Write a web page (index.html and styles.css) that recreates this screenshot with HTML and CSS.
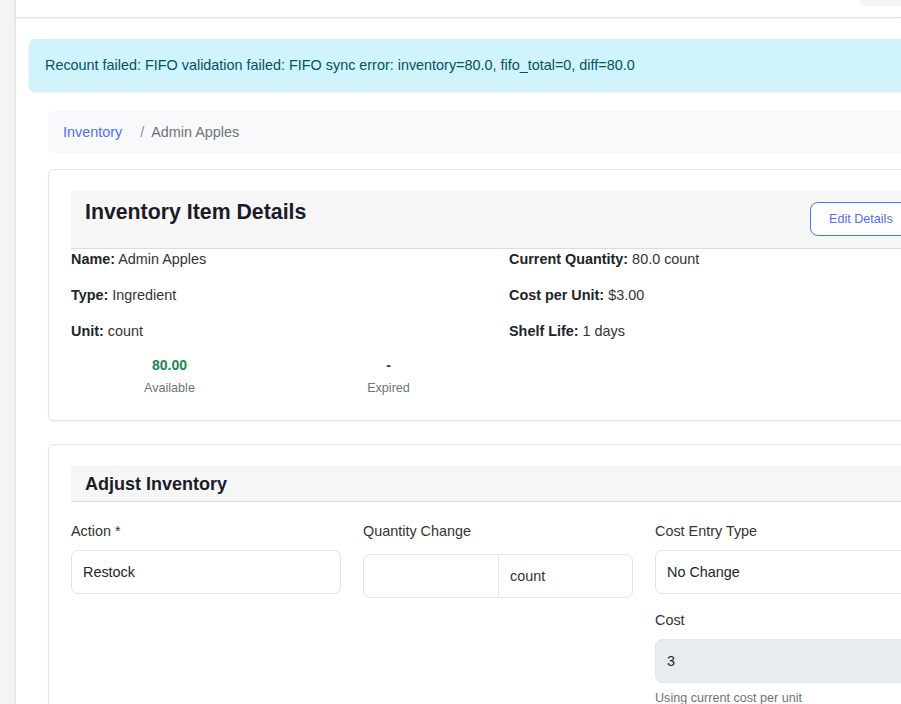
FILE: index.html
```html
<!DOCTYPE html>
<html lang="en">
<head>
<meta charset="utf-8">
<title>Admin Apples - Inventory</title>
<link rel="stylesheet" href="styles.css">
</head>
<body>
<div class="layout">
  <aside class="sidebar"></aside>
  <main class="main">
    <header class="topbar"><div class="topbar-btn"></div></header>
    <div class="content">
      <div class="alert">Recount failed: FIFO validation failed: FIFO sync error: inventory=80.0, fifo_total=0, diff=80.0</div>
      <div class="inner">
        <nav class="breadcrumb">
          <a class="crumb-link" href="#">Inventory</a>
          <span class="crumb-sep">/</span>
          <span class="crumb-current">Admin Apples</span>
        </nav>

        <section class="card card-details">
          <div class="card-header">
            <h2 class="card-title">Inventory Item Details</h2>
            <button class="btn-outline" type="button">Edit Details</button>
          </div>
          <div class="details">
            <div class="details-col">
              <p class="detail"><b>Name:</b> Admin Apples</p>
              <p class="detail"><b>Type:</b> Ingredient</p>
              <p class="detail"><b>Unit:</b> count</p>
              <div class="stats">
                <div class="stat">
                  <div class="stat-value green">80.00</div>
                  <div class="stat-label">Available</div>
                </div>
                <div class="stat">
                  <div class="stat-value">-</div>
                  <div class="stat-label">Expired</div>
                </div>
              </div>
            </div>
            <div class="details-col">
              <p class="detail"><b>Current Quantity:</b> 80.0 count</p>
              <p class="detail"><b>Cost per Unit:</b> $3.00</p>
              <p class="detail"><b>Shelf Life:</b> 1 days</p>
            </div>
          </div>
        </section>

        <section class="card card-adjust">
          <div class="card-header small">
            <h3 class="card-title sm">Adjust Inventory</h3>
          </div>
          <div class="form-grid">
            <div class="field">
              <div class="label">Action *</div>
              <div class="control">Restock</div>
            </div>
            <div class="field">
              <div class="label">Quantity Change</div>
              <div class="input-group">
                <div class="ig-input"></div>
                <div class="ig-addon">count</div>
              </div>
            </div>
            <div class="field">
              <div class="label">Cost Entry Type</div>
              <div class="control">No Change</div>
              <div class="label mt">Cost</div>
              <div class="control disabled">3</div>
              <div class="help">Using current cost per unit</div>
            </div>
          </div>
        </section>
      </div>
    </div>
  </main>
</div>
</body>
</html>
```
FILE: styles.css
```css
html, body {
  margin: 0;
  padding: 0;
  width: 901px;
  height: 704px;
  overflow: hidden;
  background: #fff;
}
body {
  font-family: "Liberation Sans", Arial, sans-serif;
  font-size: 14.4px;
  color: #212529;
}
.layout {
  display: flex;
  min-height: 704px;
}
.sidebar {
  width: 14px;
  flex: none;
  background: #f4f4f4;
  border-right: 2px solid #e9e9e9;
}
.main {
  flex: 1;
  min-width: 0;
}
.topbar {
  height: 17px;
  border-bottom: 1px solid #e3e3e3;
  box-shadow: 0 1px 2px rgba(0, 0, 0, 0.05);
  display: flex;
  justify-content: flex-end;
}
.topbar-btn {
  width: 42px;
  height: 6px;
  background: #f5f6f8;
  border-bottom-left-radius: 6px;
}
.content {
  padding: 21px 0 0 13px;
}
.alert {
  width: 1000px;
  padding: 16px;
  background: #cff4fc;
  color: #055160;
  border-radius: 6px;
  line-height: 20px;
  box-shadow: 0 1px 2px rgba(0, 0, 0, 0.12);
}
.inner {
  margin: 20px 0 0 19px;
  width: 900px;
}
.breadcrumb {
  display: flex;
  align-items: center;
  background: #f8f9fa;
  border-radius: 6px;
  padding: 11px 15px;
  line-height: 20px;
}
.crumb-link {
  color: #4f72f3;
  text-decoration: none;
}
.crumb-sep {
  color: #8a9096;
  margin: 0 7px 0 18px;
}
.crumb-current {
  color: #6c757d;
}
.card {
  margin-top: 16px;
  border: 1px solid #e3e3e3;
  border-radius: 6px;
  padding: 21px 22px 23px;
  box-shadow: 0 1px 2px rgba(0, 0, 0, 0.05);
}
.card-adjust {
  margin-top: 23px;
}
.card-header {
  display: flex;
  justify-content: space-between;
  align-items: flex-start;
  background: #f6f6f6;
  padding: 11px 14px 12px;
  border-bottom: 1px solid #dcdcdc;
}
.card-header.small {
  padding: 6px 14px 5px;
}
.card-title {
  margin: -2px 0 0;
  font-size: 21.3px;
  line-height: 24px;
  font-weight: bold;
  color: #1b1b2a;
}
.card-title.sm {
  margin: 0;
  font-size: 18px;
}
.btn-outline {
  height: 34px;
  padding: 0 18px;
  margin-right: -14px;
  background: #fff;
  border: 1px solid #3a7cfc;
  border-radius: 8px;
  color: #4d6ef5;
  font-family: inherit;
  font-size: 12.6px;
  width: 115px;
  text-align: left;
}
.details {
  display: grid;
  grid-template-columns: 416px 416px;
  column-gap: 22px;
}
.detail {
  margin: 0 0 16px;
  line-height: 20px;
  color: #333;
}
.detail b {
  color: #212529;
}
.stats {
  display: grid;
  grid-template-columns: 219px 219px;
  margin: -2px 0 0 -11px;
  text-align: center;
}
.stat-value {
  font-size: 14px;
  font-weight: bold;
  line-height: 20px;
  color: #333;
}
.stat-value.green {
  color: #198754;
}
.stat-label {
  margin-top: 4px;
  font-size: 12.6px;
  line-height: 18px;
  color: #6c757d;
}
.form-grid {
  display: grid;
  grid-template-columns: 270px 270px 270px;
  column-gap: 22px;
  margin-top: 19px;
}
.label {
  line-height: 20px;
  margin-bottom: 9px;
  color: #333;
}
.label.mt {
  margin-top: 16px;
}
.control {
  height: 42px;
  border: 1px solid #e2e2e2;
  border-radius: 7px;
  padding: 0 11px;
  display: flex;
  align-items: center;
  color: #212529;
  background: #fff;
}
.control.disabled {
  background: #e9ecef;
  border-color: #e3e6e9;
}
.input-group {
  margin-top: 13px;
  height: 42px;
  display: flex;
  border: 1px solid #e2e2e2;
  border-radius: 7px;
}
.ig-input {
  width: 134px;
  border-right: 1px solid #e6e6e6;
}
.ig-addon {
  flex: 1;
  display: flex;
  align-items: center;
  padding-left: 11px;
  color: #333;
}
.help {
  margin-top: 7px;
  font-size: 12.6px;
  line-height: 16px;
  color: #6c757d;
}
```
